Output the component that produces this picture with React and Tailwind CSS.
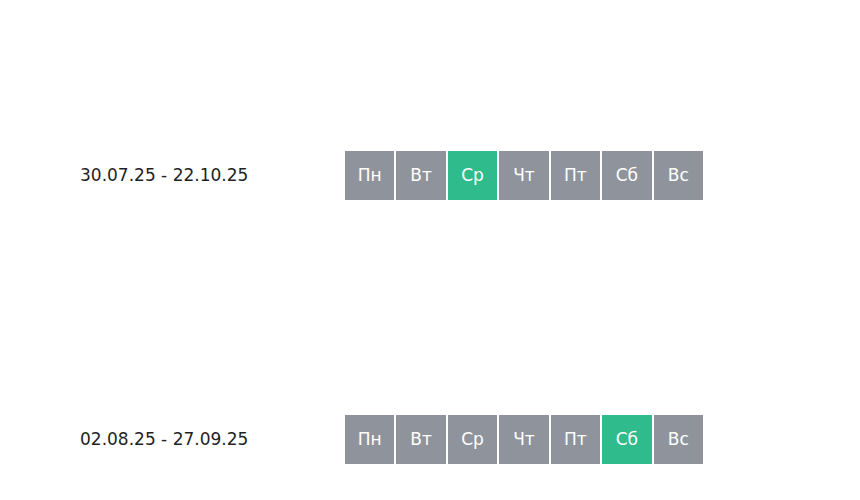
import React from "react";

const DAYS = ["Пн", "Вт", "Ср", "Чт", "Пт", "Сб", "Вс"];

function Row({ range, active, className = "" }) {
  return (
    <div className={"flex items-center " + className}>
      <div className="w-[265px] text-[17px] text-[#1f1f1f] leading-none">{range}</div>
      <div className="flex w-[358px] gap-[2px]">
        {DAYS.map((d, i) => (
          <div
            key={d}
            className={
              "flex h-[49px] flex-1 items-center justify-center text-[17px] text-white " +
              (i === active ? "bg-[#2fbb8b]" : "bg-[#8f949c]")
            }
          >
            {d}
          </div>
        ))}
      </div>
    </div>
  );
}

export default function App() {
  return (
    <div className="h-[500px] w-[860px] bg-white pl-[80px] pt-[151px]" style={{ fontFamily: '"DejaVu Sans", sans-serif' }}>
      <Row range="30.07.25 - 22.10.25" active={2} />
      <Row range="02.08.25 - 27.09.25" active={5} className="mt-[215px]" />
    </div>
  );
}
